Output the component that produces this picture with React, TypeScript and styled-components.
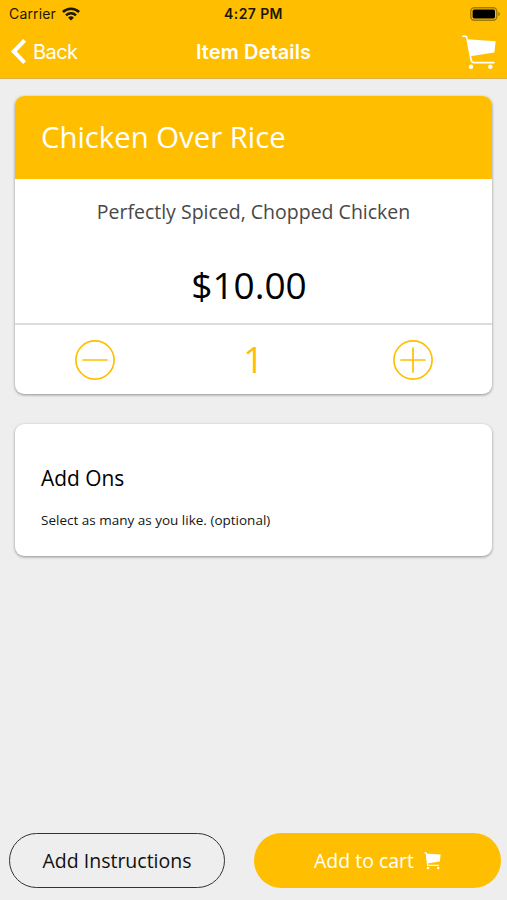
import React from 'react';
import styled, { createGlobalStyle } from 'styled-components';

const AMBER = '#ffbf00';

const GlobalStyle = createGlobalStyle`
  * { box-sizing: border-box; }
  body { margin: 0; background: #eeeeee; }
  button { appearance: none; border: 0; padding: 0; background: none; font: inherit; color: inherit; cursor: pointer; }
`;

const Screen = styled.div`
  display: flex;
  flex-direction: column;
  height: 900px;
  width: 507px;
  background: #eeeeee;
  font-family: 'Open Sans', sans-serif;
  color: #000;
  overflow: hidden;
  white-space: nowrap;
`;

const Header = styled.header`
  height: 79px;
  flex: none;
  background: ${AMBER};
  border-bottom: 1px solid #d9b24a;
  font-family: Inter, sans-serif;
`;

const StatusBar = styled.div`
  display: grid;
  grid-template-columns: 1fr auto 1fr;
  align-items: center;
  height: 27px;
  padding: 0 7px 0 9px;
  font-size: 14px;
  color: #1d1700;
`;

const Carrier = styled.div`
  display: flex;
  align-items: center;
  gap: 6px;
  letter-spacing: 0.15px;
`;

const Clock = styled.div`
  margin-right: 2px;
  font-weight: 600;
  letter-spacing: 0.4px;
`;

const BatterySlot = styled.div`
  display: flex;
  justify-content: flex-end;
`;

const NavBar = styled.nav`
  display: grid;
  grid-template-columns: 1fr auto 1fr;
  align-items: center;
  height: 50px;
  padding: 0 11px;
  color: #fff;
`;

const BackButton = styled.button`
  display: flex;
  align-items: center;
  gap: 7px;
  font-size: 20px;
  letter-spacing: -0.55px;
`;

const NavTitle = styled.h1`
  margin: 0;
  font-size: 20px;
  font-weight: 600;
  letter-spacing: 0.1px;
`;

const CartButton = styled.button`
  justify-self: end;
  display: flex;
`;

const Content = styled.main`
  flex: 1;
  display: flex;
  flex-direction: column;
  gap: 30px;
  padding: 17px 15px 0;
`;

const Card = styled.section`
  border-radius: 9px;
  background: #fff;
  overflow: hidden;
  box-shadow: 0 1px 3px rgba(0, 0, 0, 0.4);
`;

const CardHeader = styled.h2`
  margin: 0;
  height: 83px;
  padding-left: 26px;
  background: ${AMBER};
  color: #fff;
  font-size: 29.3px;
  font-weight: 400;
  line-height: 82px;
`;

const Summary = styled.div`
  height: 146px;
  padding-top: 20px;
  border-bottom: 2px solid #dcdcdc;
  text-align: center;
`;

const Description = styled.p`
  margin: 0;
  font-size: 19.5px;
  line-height: 26px;
  color: #484848;
`;

const Price = styled.p`
  margin: 35px 9px 0 0;
  font-size: 37px;
  line-height: 50px;
`;

const Stepper = styled.div`
  display: grid;
  grid-template-columns: repeat(3, 1fr);
  align-items: center;
  justify-items: center;
  height: 69px;
  padding-top: 1px;
  color: ${AMBER};
`;

const StepButton = styled.button`
  display: flex;
`;

const Quantity = styled.span`
  font-size: 36px;
  line-height: 50px;
`;

const AddOns = styled.div`
  height: 132px;
  padding: 40px 26px 0;
`;

const SectionTitle = styled.h3`
  margin: 0;
  font-size: 20.9px;
  font-weight: 400;
  line-height: 28px;
`;

const Hint = styled.p`
  margin: 19px 0 0;
  font-size: 13.5px;
  line-height: 18px;
  color: #151515;
`;

const Footer = styled.footer`
  display: grid;
  grid-template-columns: 216px 247px;
  gap: 29px;
  padding: 0 6px 12px 9px;
`;

const PillButton = styled.button<{ $filled?: boolean }>`
  display: flex;
  align-items: center;
  justify-content: center;
  gap: 10px;
  height: 55px;
  border-radius: 28px;
  border: ${(p) => (p.$filled ? '0' : '1.5px solid #333')};
  background: ${(p) => (p.$filled ? AMBER : 'transparent')};
  color: ${(p) => (p.$filled ? '#fff' : '#111')};
  font-size: 19.5px;
`;

const Wifi = () => (
  <svg width="18" height="14" viewBox="0 0 18 14" fill="none" stroke="#1d1700" strokeWidth="2.5">
    <path d="M0.9 5A11.8 11.8 0 0 1 17.1 5" />
    <path d="M4 8.3A7.3 7.3 0 0 1 14 8.3" />
    <path d="M9 13.6L6.1 10.7A4.1 4.1 0 0 1 11.9 10.7Z" fill="#1d1700" stroke="none" />
  </svg>
);

const Battery = () => (
  <svg width="30" height="14" viewBox="0 0 30 14">
    <rect x="0.8" y="0.8" width="26" height="12.4" rx="3.6" fill="none" stroke="#a17a05" strokeWidth="1.4" />
    <rect x="2.6" y="2.6" width="22.4" height="8.8" rx="1.6" fill="#000" />
    <path d="M28.3 4.8Q30 5.6 30 7T28.3 9.2Z" fill="#a17a05" />
  </svg>
);

const Chevron = () => (
  <svg width="15" height="27" viewBox="0 0 15 27" fill="none" stroke="#fff" strokeWidth="4">
    <path d="M13.6 1.4L2.8 12.5L13.6 23.6" />
  </svg>
);

const Cart = () => (
  <svg width="34" height="34" viewBox="0 0 34 34" fill="none">
    <path d="M0.8 1.3H3.2Q4.6 1.3 4.9 2.8L9 24.5Q9.6 27.6 12 27.6H32" stroke="#fff" strokeWidth="1.6" strokeLinecap="round" />
    <path d="M5.3 4.2L33.6 6.2L32.4 17.4L8.4 21.2Z" fill="#fff" />
    <circle cx="9" cy="31.7" r="2.2" fill="#fff" />
    <circle cx="28.3" cy="31.7" r="2.2" fill="#fff" />
  </svg>
);

const SmallCart = () => (
  <svg width="17" height="18" viewBox="0 0 17 18" fill="none">
    <path d="M0.4 0.9H2.2L3.6 13.4H15" stroke="#fff" strokeWidth="1.1" />
    <path d="M1.9 1.6L16.6 2.5L15.9 9.4L3.4 11.4Z" fill="#fff" />
    <circle cx="4" cy="16" r="1.3" fill="#fff" />
    <circle cx="14.2" cy="16" r="1.3" fill="#fff" />
  </svg>
);

const StepIcon = ({ plus = false }: { plus?: boolean }) => (
  <svg width="40" height="40" viewBox="0 0 40 40" fill="none" stroke={AMBER} strokeWidth="1.7">
    <circle cx="20" cy="20" r="19.1" />
    <path d="M8 20H32" strokeLinecap="round" />
    {plus && <path d="M20 8V32" strokeLinecap="round" />}
  </svg>
);

export default function App() {
  return (
    <Screen>
      <GlobalStyle />
      <Header>
        <StatusBar>
          <Carrier>Carrier <Wifi /></Carrier>
          <Clock>4:27 PM</Clock>
          <BatterySlot><Battery /></BatterySlot>
        </StatusBar>
        <NavBar>
          <BackButton><Chevron />Back</BackButton>
          <NavTitle>Item Details</NavTitle>
          <CartButton aria-label="Cart"><Cart /></CartButton>
        </NavBar>
      </Header>
      <Content>
        <Card>
          <CardHeader>Chicken Over Rice</CardHeader>
          <Summary>
            <Description>Perfectly Spiced, Chopped Chicken</Description>
            <Price>$10.00</Price>
          </Summary>
          <Stepper>
            <StepButton aria-label="Decrease"><StepIcon /></StepButton>
            <Quantity>1</Quantity>
            <StepButton aria-label="Increase"><StepIcon plus /></StepButton>
          </Stepper>
        </Card>
        <Card>
          <AddOns>
            <SectionTitle>Add Ons</SectionTitle>
            <Hint>Select as many as you like. (optional)</Hint>
          </AddOns>
        </Card>
      </Content>
      <Footer>
        <PillButton>Add Instructions</PillButton>
        <PillButton $filled>Add to cart <SmallCart /></PillButton>
      </Footer>
    </Screen>
  );
}
